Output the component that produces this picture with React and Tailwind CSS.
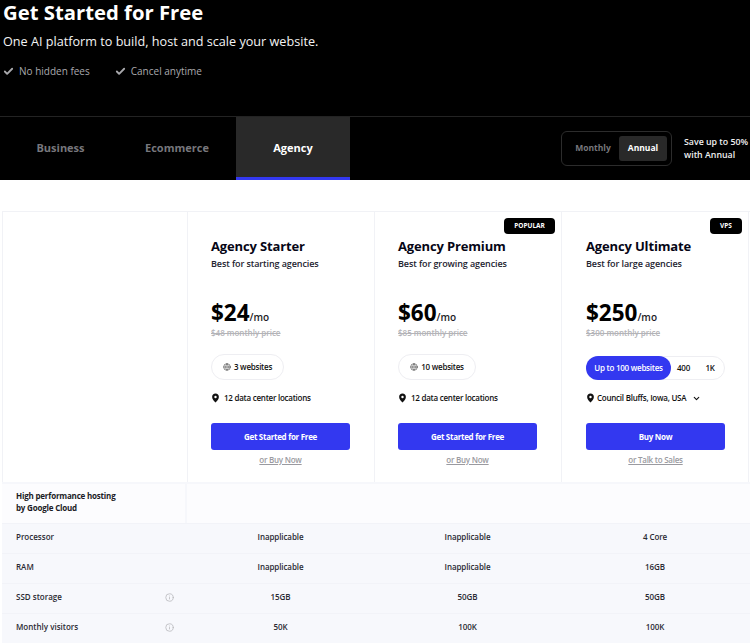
import { Check, ChevronDown, Globe, Info } from 'lucide-react';
import clsx from 'clsx';

const plans = [
  { name: 'Agency Starter', tagline: 'Best for starting agencies', price: '$24', old: '$48 monthly price', sites: '3 websites', pill: 'w-[73px]', cta: 'Get Started for Free', alt: 'or Buy Now' },
  { name: 'Agency Premium', tagline: 'Best for growing agencies', price: '$60', old: '$85 monthly price', sites: '10 websites', pill: 'w-[78px]', cta: 'Get Started for Free', alt: 'or Buy Now', badge: 'POPULAR' },
  { name: 'Agency Ultimate', tagline: 'Best for large agencies', price: '$250', old: '$300 monthly price', cta: 'Buy Now', alt: 'or Talk to Sales', badge: 'VPS', ultimate: true },
];

const rows = [
  { label: 'Processor', values: ['Inapplicable', 'Inapplicable', '4 Core'] },
  { label: 'RAM', values: ['Inapplicable', 'Inapplicable', '16GB'] },
  { label: 'SSD storage', values: ['15GB', '50GB', '50GB'], info: true },
  { label: 'Monthly visitors', values: ['50K', '100K', '100K'], info: true },
];

const columns = 'grid grid-cols-[185px_187px_187px_188px]';

function Pin() {
  return (
    <svg width="9" height="10" viewBox="0 0 24 26" className="shrink-0">
      <path fillRule="evenodd" fill="#111" d="M12 1C6.500 1 3 5.200 3 10c0 6 6 12 9 15 3-3 9-9 9-15 0-4.800-3.500-9-9-9zm0 6a3.200 3.200 0 1 1 0 6.400A3.200 3.200 0 0 1 12 7z" />
    </svg>
  );
}

function Tab({ label, active, className }) {
  return (
    <div className={clsx('flex items-center justify-center h-full pt-[2px] text-[11px] font-bold border-b-[3px]', className, active ? 'bg-[#292929] text-white border-[#3338f0]' : 'text-[#77777c] border-transparent')}>
      {label}
    </div>
  );
}

function PlanCard({ plan, last }) {
  return (
    <div className={clsx('relative flex flex-col h-[270px] pr-6 pt-[25px] border-l border-[#f1f2f6]', last ? 'border-r pl-6' : 'pl-[23px]')}>
      {plan.badge && (
        <span className={clsx('absolute top-[6px] right-[6px] h-4 flex items-center justify-center rounded-[4px] bg-black text-white text-[6.5px] font-bold', plan.ultimate ? 'w-8' : 'w-[51px]')}>
          {plan.badge}
        </span>
      )}
      <h2 className="text-[13px] leading-[18px] font-bold tracking-[-0.15px] text-[#060616] whitespace-nowrap">{plan.name}</h2>
      <p className="mt-px text-[9px] leading-[16px] font-semibold tracking-[-0.1px] text-[#23232f] whitespace-nowrap">{plan.tagline}</p>
      <div className="mt-[25px] flex items-baseline h-[31px] text-black">
        <span className="text-[22.5px] leading-[31px] font-bold">{plan.price}</span>
        <span className="text-[10px] font-semibold text-[#1d1d1f]">/mo</span>
      </div>
      <p className="-mt-[2px] text-[8px] leading-[14px] font-semibold text-[#b4b4b8] line-through whitespace-nowrap">{plan.old}</p>
      {plan.ultimate ? (
        <div className="mt-4 flex items-center w-[139px] h-6 rounded-full border border-[#eeeef2] text-[8px] tracking-[-0.25px] font-semibold text-[#111]">
          <span className="flex items-center justify-center w-[85px] h-6 -ml-px rounded-full bg-[#3338f0] text-white whitespace-nowrap">Up to 100 websites</span>
          <span className="w-[25px] text-center">400</span>
          <span className="w-[28px] text-center">1K</span>
        </div>
      ) : (
        <div className={clsx('mt-[14px] flex items-center justify-center gap-[3px] h-[26px] rounded-full border border-[#eeeef2] text-[8px] tracking-[-0.25px] font-semibold text-[#111] self-start whitespace-nowrap', plan.pill)}>
          <Globe size={8} className="text-[#555]" />
          {plan.sites}
        </div>
      )}
      <div className={clsx('mt-3 flex items-center text-[8px] tracking-[-0.25px] leading-3 font-semibold text-[#111] whitespace-nowrap', plan.ultimate ? 'gap-[2px]' : 'gap-[4px]')}>
        <Pin />
        {plan.ultimate ? (
          <>
            Council Bluffs, Iowa, USA
            <ChevronDown size={9} strokeWidth={3} className="ml-[4px]" />
          </>
        ) : '12 data center locations'}
      </div>
      <button type="button" className="mt-[19px] shrink-0 w-[139px] h-[27px] rounded-[3px] bg-[#3338f0] text-white text-[8px] tracking-[-0.3px] font-bold">{plan.cta}</button>
      <a className="mt-1 w-[139px] text-center text-[8px] tracking-[-0.25px] leading-3 font-semibold text-[#9a9aa0] underline">{plan.alt}</a>
    </div>
  );
}

export default function App() {
  return (
    <div className="w-[750px] h-[643px] overflow-hidden bg-white font-['Open_Sans',sans-serif]">
      <header className="bg-black h-[180px] text-white">
        <div className="h-[117px] pl-[3px] border-b border-[#232323]">
          <h1 className="text-[20.3px] leading-[25px] font-bold">Get Started for Free</h1>
          <p className="mt-[7px] text-[12.65px] leading-[18px] text-[#f4f4f4]">One AI platform to build, host and scale your website.</p>
          <ul className="mt-[14px] flex gap-[25px] text-[10px] leading-[14px] text-[#a9a9ad]">
            <li className="flex items-center gap-[5px]"><Check size={11} strokeWidth={4} />No hidden fees</li>
            <li className="flex items-center gap-[5px]"><Check size={11} strokeWidth={4} />Cancel anytime</li>
          </ul>
        </div>
        <div className="flex items-center h-[63px]">
          <Tab label="Business" className="w-[121px]" />
          <Tab label="Ecommerce" className="w-[115px] pr-[3px]" />
          <Tab label="Agency" className="w-[114px]" active />
          <div className="ml-auto flex items-center gap-3">
            <div className="flex items-center w-[111px] h-[35px] pl-[5px] rounded-[6px] border border-[#2c2c2c]">
              <span className="w-[52px] text-center text-[8.5px] font-bold text-[#77777c]">Monthly</span>
              <span className="flex items-center justify-center w-[48px] h-[25px] rounded-[3px] bg-[#292929] text-[8.5px] font-bold text-white">Annual</span>
            </div>
            <p className="w-[66px] text-[8.8px] leading-[13px] font-semibold text-[#f0f0f0] whitespace-nowrap">Save up to 50%<br />with Annual</p>
          </div>
        </div>
      </header>

      <main className="pt-[31px] pl-[2px]">
        <div className={clsx(columns, 'border-t border-[#f1f2f6]')}>
          <div className="border-l border-[#f1f2f6]" />
          {plans.map((plan, i) => <PlanCard key={plan.name} plan={plan} last={i === 2} />)}
        </div>
        <div className={clsx(columns, 'h-[41px] border-t-2 border-[#f6f7fb] bg-[#fcfcfe]')}>
          <div className="pl-[14px] pt-[6px] text-[8px] tracking-[-0.2px] leading-[12px] font-bold text-[#1b1b25] border-r-2 border-[#f6f7fb]">
            High performance hosting<br />by Google Cloud
          </div>
        </div>
        {rows.map(row => (
          <div key={row.label} className={clsx(columns, 'h-[30px] items-center pb-[3px] bg-[#f7f8fc] border-t border-[#f2f3f8] text-[8px] font-semibold text-[#2a2a33]')}>
            <div className="flex items-center justify-between pl-[14px] pr-[13px]">
              {row.label}
              {row.info && <Info size={9} className="text-[#b5b5b9]" />}
            </div>
            {row.values.map((v, i) => <div key={i} className="text-center tracking-[-0.1px]">{v}</div>)}
          </div>
        ))}
      </main>
    </div>
  );
}
